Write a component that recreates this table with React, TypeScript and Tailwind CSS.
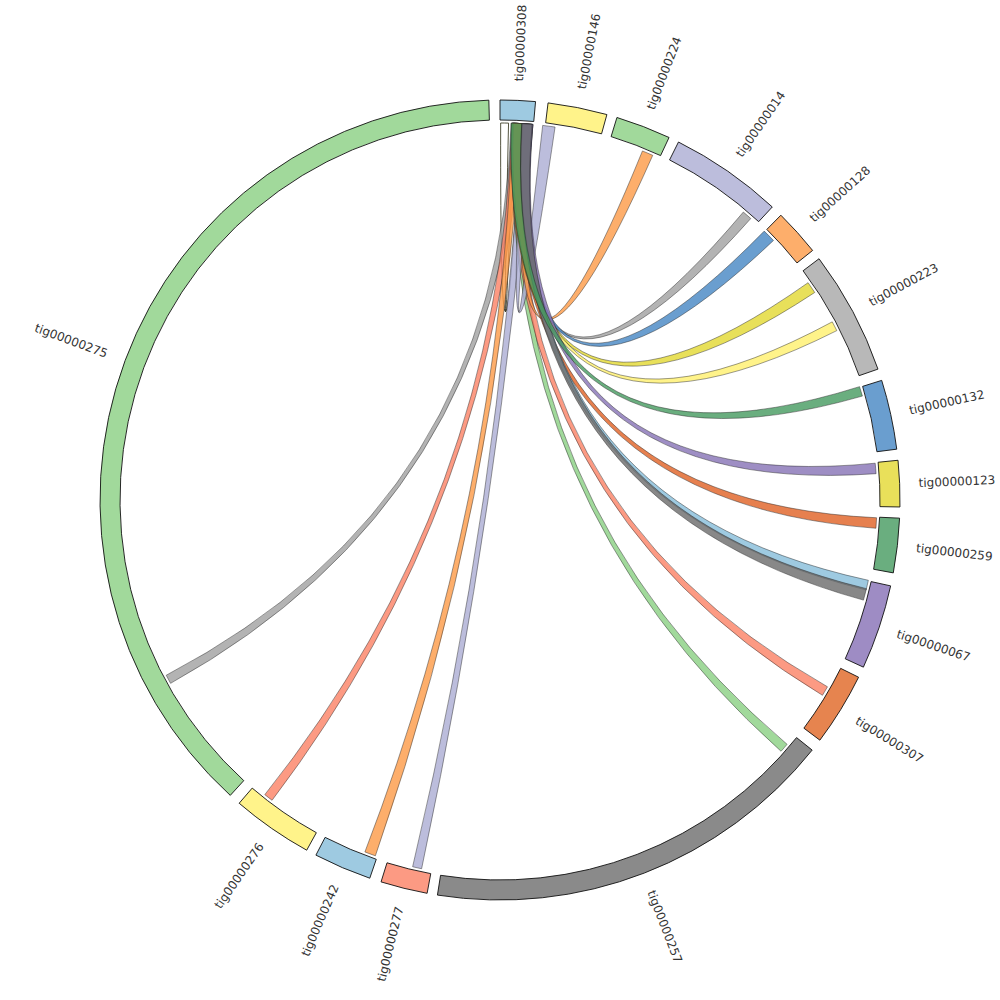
import React from "react";

const CX = 500;
const CY = 500;
const R_OUT = 400;
const R_IN = 380;
const R_CH = 377;
const R_LAB = 419;
const ALPHA = 0.8;

const rad = (d: number) => (d * Math.PI) / 180;
const pt = (r: number, a: number): [number, number] => [
  CX + r * Math.sin(rad(a)),
  CY - r * Math.cos(rad(a)),
];
const f = (p: [number, number]) => `${p[0].toFixed(2)} ${p[1].toFixed(2)}`;

function segPath(a1: number, a2: number) {
  const large = a2 - a1 > 180 ? 1 : 0;
  return `M ${f(pt(R_OUT, a1))} A ${R_OUT} ${R_OUT} 0 ${large} 1 ${f(
    pt(R_OUT, a2)
  )} L ${f(pt(R_IN, a2))} A ${R_IN} ${R_IN} 0 ${large} 0 ${f(
    pt(R_IN, a1)
  )} Z`;
}

function chordPath(s1: number, e1: number, s2: number, e2: number) {
  const r = R_CH;
  return `M ${f(pt(r, s1))} A ${r} ${r} 0 0 1 ${f(pt(r, e1))} Q ${CX} ${CY} ${f(
    pt(r, s2)
  )} A ${r} ${r} 0 0 1 ${f(pt(r, e2))} Q ${CX} ${CY} ${f(pt(r, s1))} Z`;
}

function baseColor(hex: string) {
  const n = parseInt(hex.slice(1), 16);
  const c = [(n >> 16) & 255, (n >> 8) & 255, n & 255].map((v) =>
    Math.max(0, Math.min(255, Math.round((v - (1 - ALPHA) * 255) / ALPHA)))
  );
  return `rgb(${c[0]},${c[1]},${c[2]})`;
}

type Seg = [string, number, number, string];
const segments: Seg[] = [
  ["tig00000308", 0, 5.1, "#9ecae1"],
  ["tig00000146", 6.9, 15.5, "#fff38a"],
  ["tig00000224", 17, 25, "#a1d99b"],
  ["tig00000014", 26.5, 42.9, "#bcbddc"],
  ["tig00000128", 44.6, 51.4, "#fdae6b"],
  ["tig00000223", 52.9, 70.9, "#b8b8b8"],
  ["tig00000132", 72.6, 82.7, "#6a9ecf"],
  ["tig00000123", 84.3, 91, "#e9e05a"],
  ["tig00000259", 92.6, 100.5, "#6aae7f"],
  ["tig00000067", 102.4, 114.7, "#9e8cc4"],
  ["tig00000307", 116.3, 126.9, "#e6844f"],
  ["tig00000257", 128.7, 189, "#8a8a8a"],
  ["tig00000277", 190.5, 197.3, "#fc9a83"],
  ["tig00000242", 199, 207.4, "#9ecae1"],
  ["tig00000276", 208.9, 220.7, "#fff38a"],
  ["tig00000275", 222.4, 358.4, "#a1d99b"],
];

type Chord = [number, number, number, number, string];
const chords: Chord[] = [
  // left / bottom side
  [1.7, 3.0, 240.9, 242.3, "#b3b3b3"],
  [1.8, 3.1, 217.2, 218.6, "#fc9a83"],
  [1.9, 3.2, 199.3, 201.0, "#fdae6b"],
  [3.3, 4.8, 192.0, 193.4, "#bcbddc"],
  [1.9, 3.2, 130.4, 131.8, "#a1d99b"],
  [1.8, 3.2, 119.7, 121.2, "#fc9a83"],
  [3.5, 5.0, 6.5, 8.4, "#bcbddc"],
  [3.5, 5.0, 22.2, 23.9, "#fdae6b"],
  [3.3, 4.8, 40.2, 41.7, "#b3b3b3"],
  [3.3, 5.0, 44.5, 46.5, "#6a9ecf"],
  [1.8, 3.3, 54.8, 56.6, "#e8e05a"],
  [1.9, 3.3, 61.8, 63.3, "#fff38a"],
  [2.0, 3.3, 92.7, 94.3, "#e6804f"],
  [3.4, 4.9, 102.3, 103.8, "#9ecae1"],
  [3.4, 5.0, 84.4, 86.0, "#9e8ec4"],
  [3.3, 4.9, 103.6, 105.4, "#888888"],
  [1.7, 3.3, 72.5, 74.0, "#6aae7f"],
];

function Label({ name, a1, a2 }: { name: string; a1: number; a2: number }) {
  const mid = (a1 + a2) / 2;
  const p = pt(R_LAB, mid);
  const flip = mid >= 180;
  const rot = flip ? mid - 270 : mid - 90;
  return (
    <text
      x={p[0]}
      y={p[1]}
      dy="0.36em"
      textAnchor={flip ? "end" : "start"}
      transform={`rotate(${rot.toFixed(2)} ${p[0].toFixed(2)} ${p[1].toFixed(2)})`}
      fontFamily="'DejaVu Sans', Verdana, sans-serif"
      fontSize={12}
      fill="#333333"
    >
      {name}
    </text>
  );
}

export default function App() {
  return (
    <div className="w-[1000px] h-[1000px] bg-white overflow-hidden">
      <svg width={1000} height={1000} viewBox="0 0 1000 1000" className="block">
        {/* self link */}
        <path
          d={chordPath(0.1, 1.3, 2.1, 3.2)}
          fill="#ffffff"
          stroke="#2a2a10"
          strokeWidth={0.8}
        />
        {chords.map((c, i) => (
          <path
            key={i}
            d={chordPath(c[0], c[1], c[2], c[3])}
            fill={baseColor(c[4])}
            fillOpacity={ALPHA}
            stroke="#222222"
            strokeOpacity={0.75}
            strokeWidth={0.6}
          />
        ))}
        {segments.map((s) => (
          <path
            key={s[0]}
            d={segPath(s[1], s[2])}
            fill={s[3]}
            stroke="#111111"
            strokeWidth={0.9}
            strokeLinejoin="miter"
          />
        ))}
        {segments.map((s) => (
          <Label key={s[0] + "l"} name={s[0]} a1={s[1]} a2={s[2]} />
        ))}
      </svg>
    </div>
  );
}
